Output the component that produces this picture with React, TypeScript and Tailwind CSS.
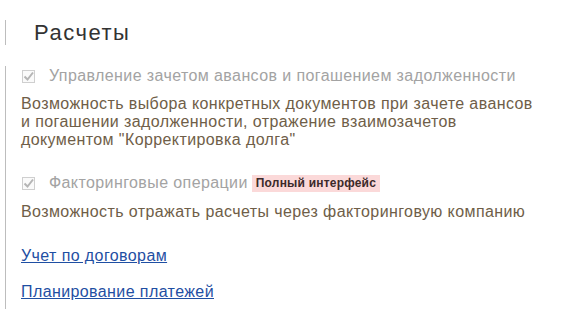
export default function App() {
    return (
        <div className="w-[580px] h-[314px] bg-white overflow-hidden font-['Liberation_Sans',Arial,sans-serif]">
            {/* Title */}
            <div className="mt-[20px] ml-[5px] h-[25px] border-l border-[#bdbdbd] pl-[28px] text-[22px] leading-[25px] tracking-[1.5px] text-[#333333]">
                Расчеты
            </div>

            {/* Body */}
            <div className="mt-[26px] ml-[5px] h-[243px] border-l border-[#bdbdbd] pl-[15px] text-[16px] tracking-[0.4px]">
                <label className="flex items-center h-[20px] -mt-[5px] text-[#a3a3a3]">
                    <CheckBox />
                    <span className="ml-[14px]">Управление зачетом авансов и погашением задолженности</span>
                </label>
                <p className="mt-[9px] leading-[18px] text-[#6f5e48]">
                    Возможность выбора конкретных документов при зачете авансов<br />
                    и погашении задолженности, отражение взаимозачетов<br />
                    документом "Корректировка долга"
                </p>

                <label className="flex items-center h-[20px] mt-[24px] text-[#a3a3a3]">
                    <CheckBox />
                    <span className="ml-[14px]">Факторинговые операции</span>
                    <span className="ml-[4px] px-[4px] bg-[#fbd9d9] text-[#3c2a2a] text-[12px] tracking-[0.2px] font-bold leading-[17px]">
                        Полный интерфейс
                    </span>
                </label>
                <p className="mt-[10px] leading-[18px] text-[#6f5e48]">
                    Возможность отражать расчеты через факторинговую компанию
                </p>

                <div className="mt-[26px] leading-[18px]">
                    <a href="#" className="text-[#1f4fa3] underline">Учет по договорам</a>
                </div>
                <div className="mt-[18px] leading-[18px]">
                    <a href="#" className="text-[#1f4fa3] underline">Планирование платежей</a>
                </div>
            </div>
        </div>
    )
}

function CheckBox() {
    return (
        <span className="flex items-center justify-center w-[13px] h-[13px] ml-[1px] border border-[#cfcfcf] bg-[#fafafa]">
            <svg width="11" height="11" viewBox="0 0 11 11">
                <path d="M1.5 5.5 L4.5 8.5 L10 1.5" fill="none" stroke="#b5b5b5" strokeWidth="2" />
            </svg>
        </span>
    )
}
